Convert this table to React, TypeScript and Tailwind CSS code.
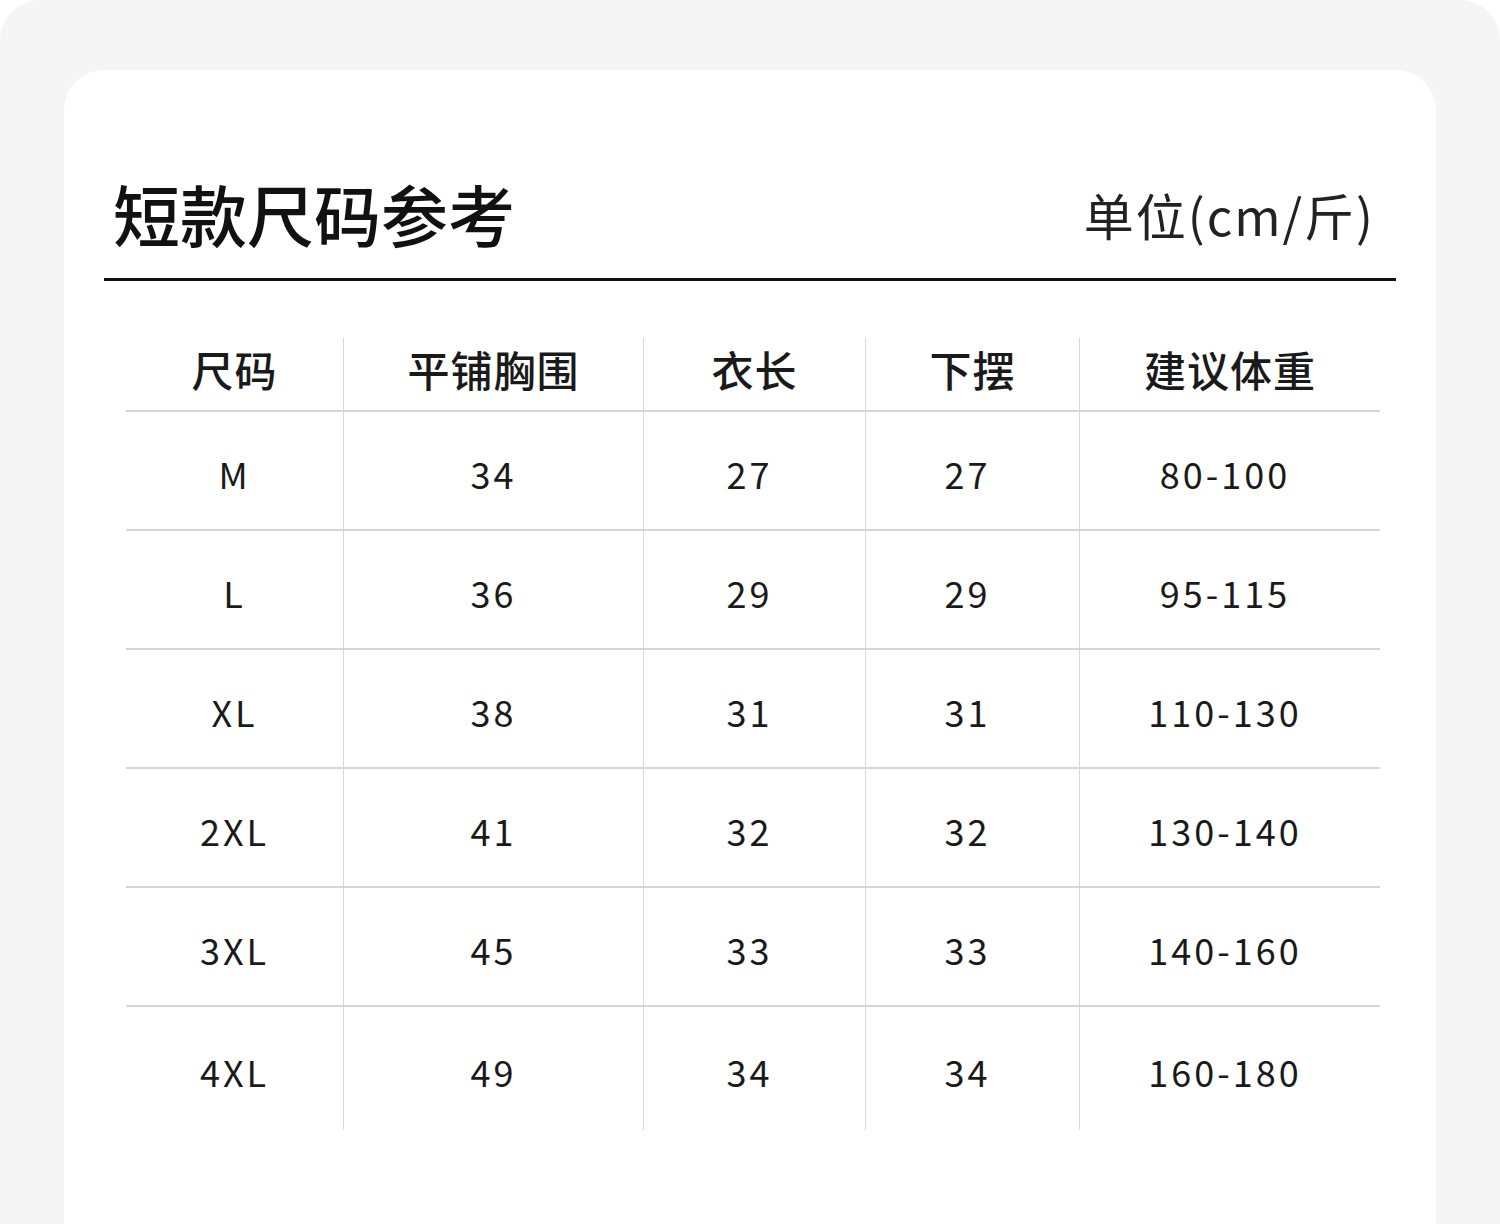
const headers = ["尺码", "平铺胸围", "衣长", "下摆", "建议体重"];

const rows = [
  ["M", "34", "27", "27", "80-100"],
  ["L", "36", "29", "29", "95-115"],
  ["XL", "38", "31", "31", "110-130"],
  ["2XL", "41", "32", "32", "130-140"],
  ["3XL", "45", "33", "33", "140-160"],
  ["4XL", "49", "34", "34", "160-180"],
];

const cols = "grid grid-cols-[217px_300px_222px_214px_301px]";

export default function App() {
  return (
    <div
      className="w-[1500px] h-[1224px] bg-white overflow-hidden"
      style={{ fontFamily: '"Noto Sans CJK SC", "Noto Sans", sans-serif' }}
    >
      <div className="h-full bg-[#f5f5f5] rounded-t-[40px] pl-[64px] pt-[70px] pr-[64px]">
        <div className="h-full bg-white rounded-t-[40px] pt-[113px] px-[40px] text-[#1a1a1a]">
          {/* Titulo */}
          <div className="flex items-center justify-between h-[66px]">
            <h1 className="text-[67px] leading-none font-medium pl-[9px] pb-[8px] text-[#111]">短款尺码参考</h1>
            <span className="text-[50px] leading-none tracking-[2px] pr-[21px] pb-[4px] text-[#222]">单位(cm/斤)</span>
          </div>
          <div className="mt-[29px] h-[3px] bg-[#111]" />

          {/* Tabla */}
          <div className="mt-[57px] ml-[22px] w-[1254px]">
            <div className={`${cols} h-[72px]`}>
              {headers.map((h, i) => (
                <div
                  key={h}
                  className={`flex items-center justify-center text-[42px] tracking-[1px] font-medium leading-none pb-[10px] ${i > 0 ? "border-l border-[#d9d9d9]" : ""}`}
                >
                  {h}
                </div>
              ))}
            </div>
            {rows.map((r, ri) => (
              <div
                key={r[0]}
                className={`${cols} border-t-2 border-[#d6d6d6] ${ri === rows.length - 1 ? "h-[125px]" : "h-[119px]"}`}
              >
                {r.map((v, i) => (
                  <div
                    key={i}
                    className={`flex items-center justify-center text-[36px] leading-none tracking-[3px] pt-[4px] ${i > 0 ? "border-l border-[#d9d9d9]" : ""} ${i === 2 || i === 3 || i === 4 ? "pr-[10px]" : ""}`}
                  >
                    {v}
                  </div>
                ))}
              </div>
            ))}
          </div>
        </div>
      </div>
    </div>
  );
}
